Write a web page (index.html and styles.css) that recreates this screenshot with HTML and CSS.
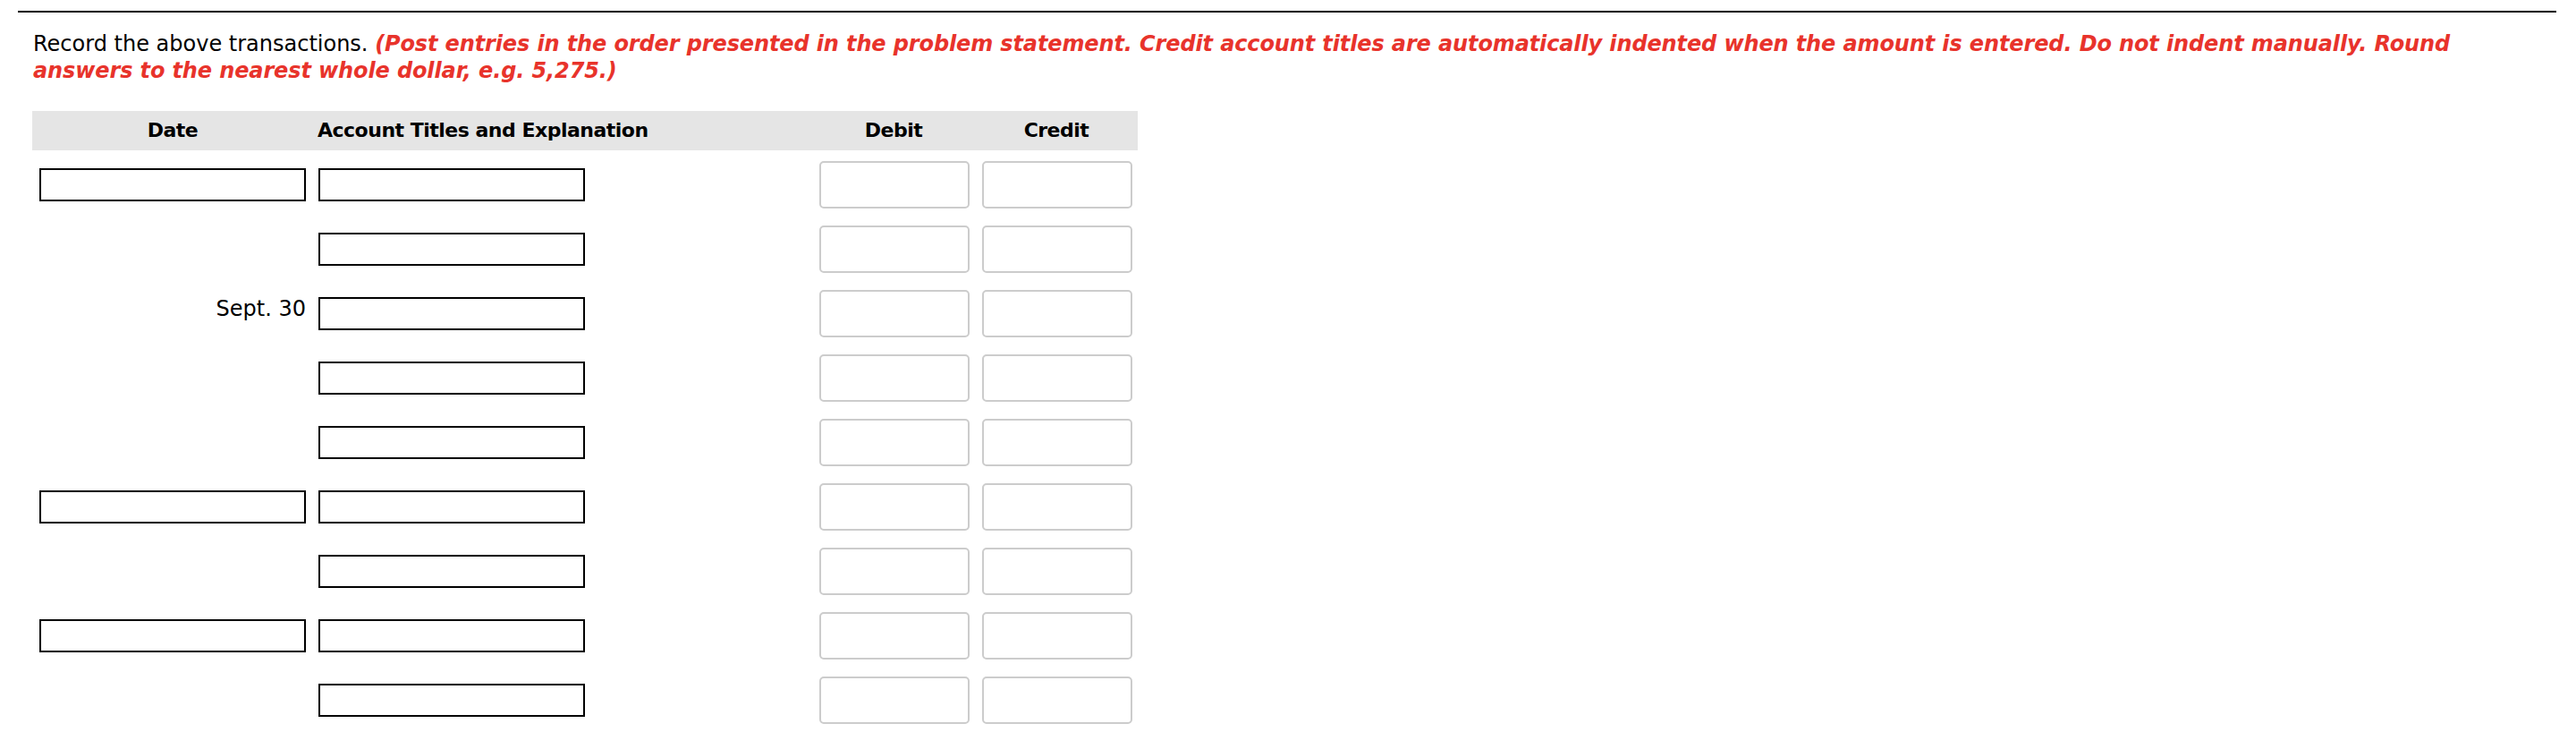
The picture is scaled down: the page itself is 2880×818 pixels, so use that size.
FILE: index.html
```html
<!DOCTYPE html>
<html lang="en">
<head>
<meta charset="utf-8">
<title>Journal entries</title>
<link rel="stylesheet" href="styles.css">
</head>
<body>
<div class="page">
  <div class="rule"></div>
  <p class="instructions">Record the above transactions. <em class="note">(Post entries in the order presented in the problem statement. Credit account titles are automatically indented when the amount is entered. Do not indent manually. Round answers to the nearest whole dollar, e.g. 5,275.)</em></p>
  <div class="journal">
    <div class="jrow head">
      <div class="hcell c-date">Date</div>
      <div class="hcell c-acct">Account Titles and Explanation</div>
      <div class="hcell c-num">Debit</div>
      <div class="hcell c-num">Credit</div>
    </div>
    <div class="jbody">
      <div class="jrow">
        <div class="cell c-date"><input class="box date-box" type="text"></div>
        <div class="cell"><input class="box acct-box" type="text"></div>
        <div class="cell"><input class="amt" type="text"></div>
        <div class="cell"><input class="amt" type="text"></div>
      </div>
      <div class="jrow">
        <div class="cell c-date"></div>
        <div class="cell"><input class="box acct-box" type="text"></div>
        <div class="cell"><input class="amt" type="text"></div>
        <div class="cell"><input class="amt" type="text"></div>
      </div>
      <div class="jrow">
        <div class="cell c-date"><span class="date-text">Sept. 30</span></div>
        <div class="cell"><input class="box acct-box" type="text"></div>
        <div class="cell"><input class="amt" type="text"></div>
        <div class="cell"><input class="amt" type="text"></div>
      </div>
      <div class="jrow">
        <div class="cell c-date"></div>
        <div class="cell"><input class="box acct-box" type="text"></div>
        <div class="cell"><input class="amt" type="text"></div>
        <div class="cell"><input class="amt" type="text"></div>
      </div>
      <div class="jrow">
        <div class="cell c-date"></div>
        <div class="cell"><input class="box acct-box" type="text"></div>
        <div class="cell"><input class="amt" type="text"></div>
        <div class="cell"><input class="amt" type="text"></div>
      </div>
      <div class="jrow">
        <div class="cell c-date"><input class="box date-box" type="text"></div>
        <div class="cell"><input class="box acct-box" type="text"></div>
        <div class="cell"><input class="amt" type="text"></div>
        <div class="cell"><input class="amt" type="text"></div>
      </div>
      <div class="jrow">
        <div class="cell c-date"></div>
        <div class="cell"><input class="box acct-box" type="text"></div>
        <div class="cell"><input class="amt" type="text"></div>
        <div class="cell"><input class="amt" type="text"></div>
      </div>
      <div class="jrow">
        <div class="cell c-date"><input class="box date-box" type="text"></div>
        <div class="cell"><input class="box acct-box" type="text"></div>
        <div class="cell"><input class="amt" type="text"></div>
        <div class="cell"><input class="amt" type="text"></div>
      </div>
      <div class="jrow">
        <div class="cell c-date"></div>
        <div class="cell"><input class="box acct-box" type="text"></div>
        <div class="cell"><input class="amt" type="text"></div>
        <div class="cell"><input class="amt" type="text"></div>
      </div>
    </div>
  </div>
</div>
</body>
</html>
```
FILE: styles.css
```css
html, body {
  margin: 0;
  padding: 0;
  background: #ffffff;
}

.page {
  padding: 12px 22px 0 20px;
  font-family: "DejaVu Sans", Verdana, sans-serif;
  color: #000000;
}

.rule {
  height: 2px;
  background: #000000;
}

.instructions {
  margin: 20px 0 0 0;
  padding: 0 17px;
  font-size: 24px;
  line-height: 30px;
}

.note {
  color: #e8332b;
  font-weight: bold;
  font-style: italic;
  letter-spacing: -0.12px;
}

.journal {
  margin: 30px 0 0 16px;
  width: 1236px;
}

.jrow {
  display: grid;
  grid-template-columns: 314px 558px 182px 182px;
  align-items: center;
}

.head {
  height: 44px;
  background: #e5e5e5;
}

.hcell {
  font-size: 22px;
  line-height: 44px;
  font-weight: bold;
  letter-spacing: -0.5px;
  text-align: center;
}

.hcell.c-acct {
  text-align: left;
  padding-left: 5px;
}

.jbody {
  padding-top: 12px;
  display: flex;
  flex-direction: column;
  gap: 19px;
}

.jbody .jrow {
  height: 53px;
}

.cell {
  display: flex;
  align-items: center;
  height: 53px;
}

.cell.c-date {
  justify-content: flex-end;
  padding-right: 8px;
}

.box {
  box-sizing: border-box;
  height: 37px;
  margin: 0;
  padding: 0 6px;
  border: 2px solid #000000;
  border-radius: 0;
  background: #ffffff;
  font: 22px "DejaVu Sans", sans-serif;
  outline: none;
}

.date-box {
  width: 298px;
}

.acct-box {
  width: 298px;
  margin-left: 6px;
}

.date-text {
  font-size: 24px;
  line-height: 30px;
  align-self: flex-start;
  margin-top: 6px;
}

.amt {
  box-sizing: border-box;
  width: 168px;
  height: 53px;
  margin: 0 0 0 8px;
  padding: 0 8px;
  border: 2px solid #cccccc;
  border-radius: 5px;
  background: #ffffff;
  font: 22px "DejaVu Sans", sans-serif;
  outline: none;
}
```
